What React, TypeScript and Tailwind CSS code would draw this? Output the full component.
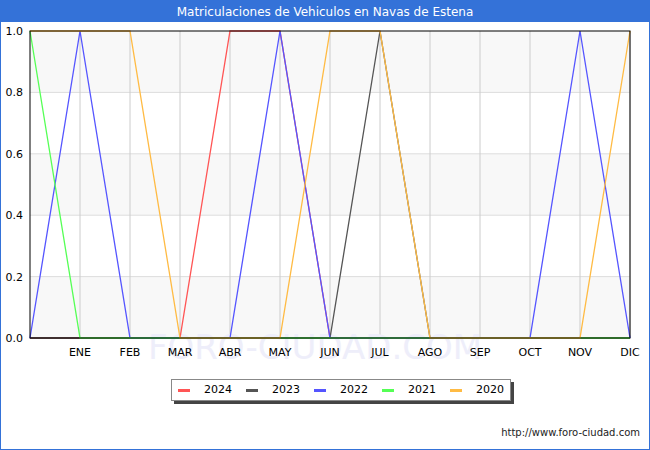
const X = (i: number) => 30 + i * 50;
const Y = (v: number) => 337 - v * 307;

const series = [
  { name: "2024", color: "#ff5555", data: [0, 0, 0, 0, 1, 1, 0, 0, 0, 0, 0, 0, 0] },
  { name: "2023", color: "#555555", data: [0, 0, 0, 0, 0, 0, 0, 1, 0, 0, 0, 0, 0] },
  { name: "2022", color: "#5555ff", data: [0, 1, 0, 0, 0, 1, 0, 0, 0, 0, 0, 1, 0] },
  { name: "2021", color: "#55ff55", data: [1, 0, 0, 0, 0, 0, 0, 0, 0, 0, 0, 0, 0] },
  { name: "2020", color: "#ffbb44", data: [1, 1, 1, 0, 0, 0, 1, 1, 0, 0, 0, 0, 1] },
];

const months = ["ENE", "FEB", "MAR", "ABR", "MAY", "JUN", "JUL", "AGO", "SEP", "OCT", "NOV", "DIC"];
const font = '"DejaVu Sans", sans-serif';

function Chart() {
  return (
    <svg width="648" height="350" className="block">
      <g transform="translate(-1,-21)" fontFamily={font} fontSize="11">
        {[0, 0.4, 0.8].map((v) => (
          <rect key={v} x={30} y={Y(v + 0.2)} width={600} height={61.4} fill="#f8f8f8" />
        ))}
        {[0.2, 0.4, 0.6, 0.8].map((v) => (
          <line key={v} x1={30} x2={630} y1={Y(v)} y2={Y(v)} stroke="#dddddd" />
        ))}
        {months.map((m, i) => (
          <line key={m} x1={X(i + 1)} x2={X(i + 1)} y1={30} y2={337} stroke="#cccccc" />
        ))}
        <text x={315} y={358} textAnchor="middle" fontSize="34" fill="#eeeefa" fontFamily={font}>
          FORO-CIUDAD.COM
        </text>
        {series.map((s) => (
          <polyline
            key={s.name}
            fill="none"
            stroke={s.color}
            strokeWidth="1.3"
            points={s.data.map((v, i) => `${X(i)},${Y(v)}`).join(" ")}
          />
        ))}
        <rect x={30} y={30} width={600} height={307} fill="none" stroke="#000" />
        {[0, 0.2, 0.4, 0.6, 0.8, 1].map((v) => (
          <text key={v} x={23} y={Y(v) + 4} textAnchor="end" fill="#000">
            {v.toFixed(1)}
          </text>
        ))}
        {months.map((m, i) => (
          <text key={m} x={X(i + 1)} y={355} textAnchor="middle" fill="#000">
            {m}
          </text>
        ))}
      </g>
    </svg>
  );
}

export default function App() {
  return (
    <div className="w-[650px] h-[450px] border border-[#3472d8] bg-white flex flex-col" style={{ fontFamily: font }}>
      <div className="h-[21px] bg-[#3472d8] text-white text-[12px] flex items-center justify-center">
        Matriculaciones de Vehiculos en Navas de Estena
      </div>
      <Chart />
      <div className="flex mt-[7px] ml-[170px]">
        <div className="flex items-center gap-[14px] h-[22px] px-[6px] border border-[#888] bg-white shadow-[3px_3px_0_#444] text-[11px] text-black">
          {series.map((s) => (
            <div key={s.name} className="flex items-center gap-[14px]">
              <span className="w-[12px] h-[3px]" style={{ background: s.color }} />
              <span>{s.name}</span>
            </div>
          ))}
        </div>
      </div>
      <div className="mt-auto mb-[9px] mr-[9px] text-right text-[10px] text-[#222]">http://www.foro-ciudad.com</div>
    </div>
  );
}
